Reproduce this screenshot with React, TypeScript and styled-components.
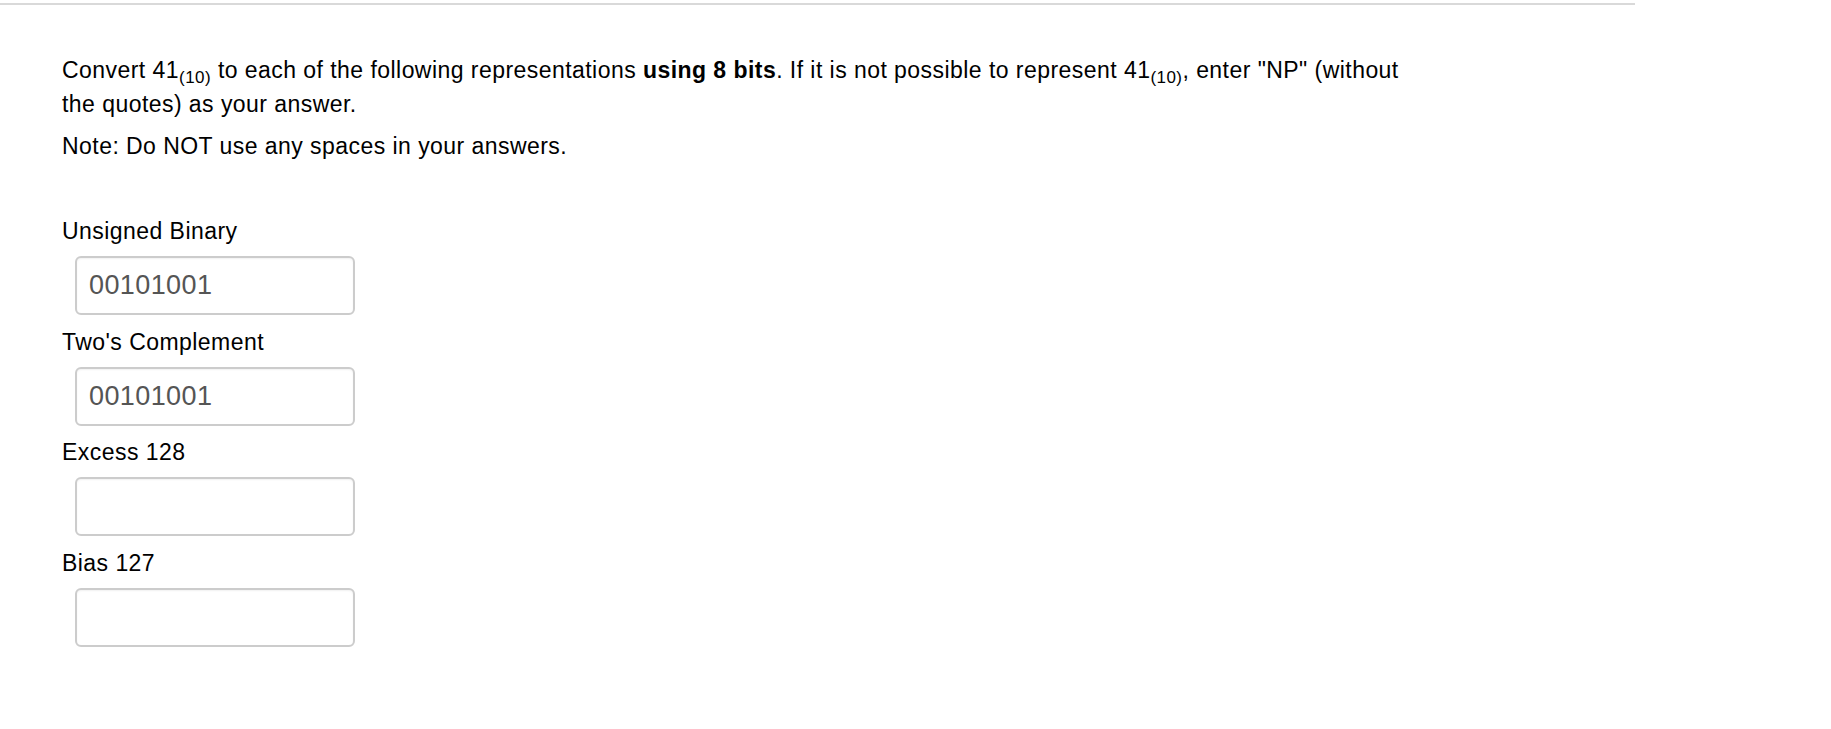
import React from "react";
import styled, { createGlobalStyle } from "styled-components";

const GlobalStyle = createGlobalStyle`
  body {
    margin: 0;
    background: #ffffff;
    font-family: "Liberation Sans", Arial, Helvetica, sans-serif;
    color: #000000;
  }
`;

const Page = styled.div`
  width: 1831px;
  height: 729px;
  padding-top: 3px;
  box-sizing: border-box;
`;

const Rule = styled.div`
  width: 1635px;
  height: 2px;
  background-color: #d9d9d9;
`;

const Content = styled.div`
  padding: 48px 0 0 62px;
  font-size: 23px;
  letter-spacing: 0.45px;
  line-height: 34px;
`;

const Paragraph = styled.p`
  margin: 0;
  width: 1350px;
`;

const Note = styled.p`
  margin: 8px 0 51px;
`;

const Sub = styled.sub`
  font-size: 17px;
  line-height: 0;
  vertical-align: -5px;
`;

const Field = styled.div`
  display: flex;
  flex-direction: column;
  align-items: flex-start;
  gap: 8px;
  margin-bottom: 9.6px;
`;

const Label = styled.label`
  display: block;
`;

const Answer = styled.input`
  margin-left: 13px;
  width: 280px;
  height: 59px;
  box-sizing: border-box;
  padding: 0 12px;
  border: 2px solid #cccccc;
  border-radius: 6px;
  box-shadow: inset 0 1px 2px rgba(0, 0, 0, 0.06);
  font-family: "Liberation Sans", Arial, Helvetica, sans-serif;
  font-size: 27px;
  letter-spacing: 0.4px;
  color: #555555;
  background: #ffffff;
  outline: none;
`;

interface IQuestion {
  label: string;
  value: string;
}

const questions: IQuestion[] = [
  { label: "Unsigned Binary", value: "00101001" },
  { label: "Two's Complement", value: "00101001" },
  { label: "Excess 128", value: "" },
  { label: "Bias 127", value: "" }
];

const App: React.FC = () => {
  return (
    <Page>
      <GlobalStyle />
      <Rule />
      <Content>
        <Paragraph>
          Convert 41<Sub>(10)</Sub> to each of the following representations{" "}
          <strong>using 8 bits</strong>. If it is not possible to represent 41
          <Sub>(10)</Sub>, enter "NP" (without the quotes) as your answer.
        </Paragraph>
        <Note>Note: Do NOT use any spaces in your answers.</Note>
        {questions.map(q => (
          <Field key={q.label}>
            <Label>{q.label}</Label>
            <Answer type="text" defaultValue={q.value} />
          </Field>
        ))}
      </Content>
    </Page>
  );
};

export default App;
